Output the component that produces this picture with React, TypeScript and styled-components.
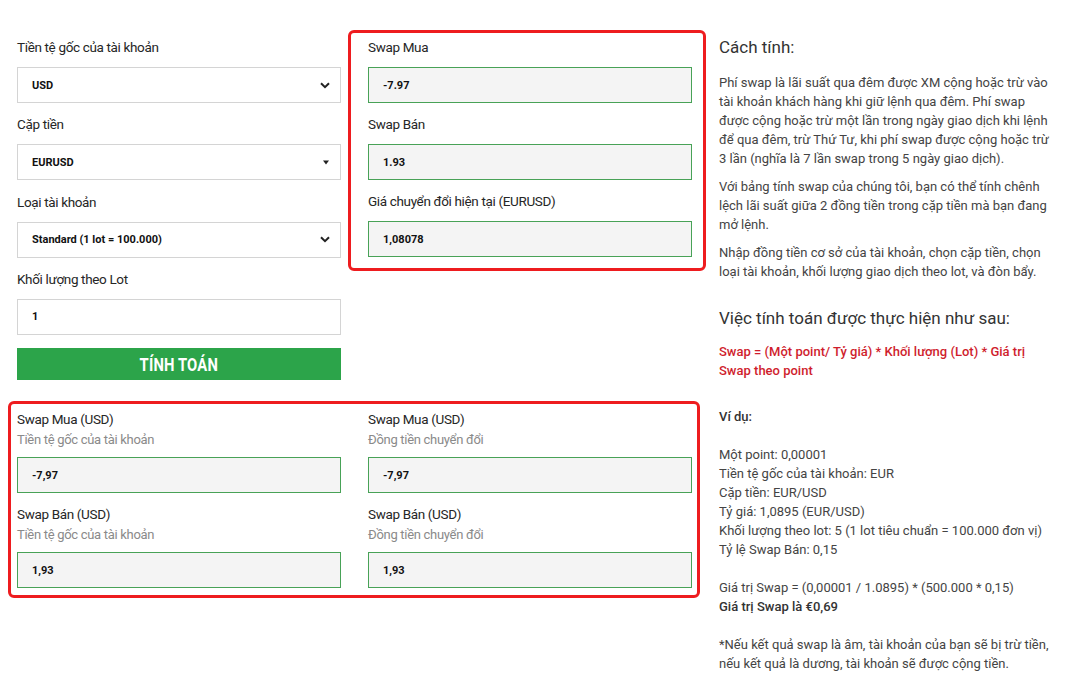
import React from "react";
import styled, { createGlobalStyle } from "styled-components";

const GlobalStyle = createGlobalStyle`
  html, body {
    margin: 0;
    padding: 0;
    background: #ffffff;
  }
  body {
    font-family: Roboto, "Noto Sans", "Liberation Sans", sans-serif;
    color: #333;
  }
  * { box-sizing: border-box; }
`;

const Page = styled.div`
  display: flex;
  align-items: flex-start;
  padding: 30px 0 0 8px;
  width: 1084px;
  min-height: 687px;
`;

const Calculator = styled.div`
  display: flex;
  flex-direction: column;
  width: 698px;
`;

const TopRow = styled.div`
  display: flex;
  align-items: flex-start;
`;

const FormColumn = styled.div`
  display: flex;
  flex-direction: column;
  gap: 13.3px;
  width: 324px;
  margin: 9px 0 0 9px;
`;

const Field = styled.div`
  display: flex;
  flex-direction: column;
`;

const Label = styled.div`
  font-size: 13.5px;
  line-height: 16px;
  height: 16px;
  color: #262626;
  letter-spacing: -0.35px;
  white-space: nowrap;
`;

const SubLabel = styled.div`
  font-size: 13px;
  line-height: 16px;
  height: 16px;
  margin-top: 5px;
  color: #8a8a8a;
  letter-spacing: -0.3px;
  white-space: nowrap;
`;

const Box = styled.div<{ $tone?: "plain" | "result" }>`
  display: flex;
  align-items: center;
  justify-content: space-between;
  height: 36px;
  margin-top: ${(p) => (p.$tone === "result" ? "9px" : "12px")};
  padding: 0 10px 0 14px;
  font-size: 11px;
  font-weight: 700;
  color: #111;
  background: ${(p) => (p.$tone === "result" ? "#f4f4f4" : "#ffffff")};
  border: ${(p) => (p.$tone === "result" ? "1px solid #48a257" : "1.5px solid #d4d4d4")};
  white-space: nowrap;
`;

const ResultBox = styled(Box)`
  margin-top: 12px;
`;

const Arrow = styled.svg`
  flex: none;
  color: #222;
`;

const CalcButton = styled.button`
  display: flex;
  align-items: center;
  justify-content: center;
  height: 32px;
  width: 100%;
  border: none;
  background: #2ca44a;
  color: #fff;
  font-family: Roboto, "Noto Sans", sans-serif;
  font-weight: 700;
  font-size: 18px;
  cursor: pointer;
  padding: 0;
`;

const ButtonText = styled.span`
  display: inline-block;
  transform: scaleX(0.82);
  letter-spacing: 0.2px;
`;

const Highlight = styled.div`
  border: 3px solid #ee1c1f;
  border-radius: 6px;
`;

const RatesBox = styled(Highlight)`
  display: flex;
  flex-direction: column;
  gap: 13px;
  width: 358px;
  margin-left: 7px;
  padding: 6px 11px 11px 17px;
`;

const ConvertedBox = styled(Highlight)`
  display: grid;
  grid-template-columns: 324px 324px;
  column-gap: 27px;
  row-gap: 13px;
  width: 692px;
  margin-top: 21px;
  padding: 7px 5px 7px 6px;
`;

const Article = styled.div`
  width: 338px;
  margin: 7px 0 0 13px;
  font-size: 13px;
  line-height: 19px;
  color: #444;
`;

const Heading = styled.h3<{ $gap?: number }>`
  margin: ${(p) => p.$gap ?? 0}px 0 0 0;
  font-size: 17px;
  line-height: 20px;
  font-weight: 400;
  color: #333;
`;

const Para = styled.p<{ $gap?: number }>`
  margin: ${(p) => p.$gap ?? 9}px 0 0 0;
`;

const Formula = styled.p`
  margin: 14px 0 0 0;
  color: #cf1d2d;
  font-weight: 500;
`;

const Strong = styled.span`
  font-weight: 500;
  color: #333;
`;

const Chevron = () => (
  <Arrow width="10" height="7" viewBox="0 0 10 7">
    <path d="M1 1.2 L5 5.2 L9 1.2" fill="none" stroke="currentColor" strokeWidth="2" />
  </Arrow>
);

const Caret = () => (
  <Arrow width="8" height="5" viewBox="0 0 8 5">
    <path d="M1 0.5 L7 0.5 L4 4.5 Z" fill="currentColor" />
  </Arrow>
);

type Option = { label: string; value: string; arrow?: "chevron" | "caret" | "none" };

const inputs: Option[] = [
  { label: "Tiền tệ gốc của tài khoản", value: "USD", arrow: "chevron" },
  { label: "Cặp tiền", value: "EURUSD", arrow: "caret" },
  { label: "Loại tài khoản", value: "Standard (1 lot = 100.000)", arrow: "chevron" },
  { label: "Khối lượng theo Lot", value: "1", arrow: "none" },
];

const rates = [
  { label: "Swap Mua", value: "-7.97" },
  { label: "Swap Bán", value: "1.93" },
  { label: "Giá chuyển đổi hiện tại (EURUSD)", value: "1,08078" },
];

const converted = [
  { label: "Swap Mua (USD)", sub: "Tiền tệ gốc của tài khoản", value: "-7,97" },
  { label: "Swap Mua (USD)", sub: "Đồng tiền chuyển đổi", value: "-7,97" },
  { label: "Swap Bán (USD)", sub: "Tiền tệ gốc của tài khoản", value: "1,93" },
  { label: "Swap Bán (USD)", sub: "Đồng tiền chuyển đổi", value: "1,93" },
];

export default function App() {
  return (
    <>
      <GlobalStyle />
      <Page>
        <Calculator>
          <TopRow>
            <FormColumn>
              {inputs.map((f) => (
                <Field key={f.label}>
                  <Label>{f.label}</Label>
                  <Box $tone="plain">
                    <span>{f.value}</span>
                    {f.arrow === "chevron" && <Chevron />}
                    {f.arrow === "caret" && <Caret />}
                  </Box>
                </Field>
              ))}
              <CalcButton>
                <ButtonText>TÍNH TOÁN</ButtonText>
              </CalcButton>
            </FormColumn>
            <RatesBox>
              {rates.map((r) => (
                <Field key={r.label}>
                  <Label>{r.label}</Label>
                  <ResultBox $tone="result">
                    <span>{r.value}</span>
                  </ResultBox>
                </Field>
              ))}
            </RatesBox>
          </TopRow>
          <ConvertedBox>
            {converted.map((c, i) => (
              <Field key={i}>
                <Label>{c.label}</Label>
                <SubLabel>{c.sub}</SubLabel>
                <Box $tone="result">
                  <span>{c.value}</span>
                </Box>
              </Field>
            ))}
          </ConvertedBox>
        </Calculator>
        <Article>
          <Heading>Cách tính:</Heading>
          <Para $gap={16}>
            Phí swap là lãi suất qua đêm được XM cộng hoặc trừ vào tài khoản khách hàng khi
            giữ lệnh qua đêm. Phí swap được cộng hoặc trừ một lần trong ngày giao dịch khi
            lệnh để qua đêm, trừ Thứ Tư, khi phí swap được cộng hoặc trừ 3 lần (nghĩa là 7
            lần swap trong 5 ngày giao dịch).
          </Para>
          <Para>
            Với bảng tính swap của chúng tôi, bạn có thể tính chênh lệch lãi suất giữa 2 đồng
            tiền trong cặp tiền mà bạn đang mở lệnh.
          </Para>
          <Para>
            Nhập đồng tiền cơ sở của tài khoản, chọn cặp tiền, chọn loại tài khoản, khối
            lượng giao dịch theo lot, và đòn bẩy.
          </Para>
          <Heading $gap={27}>Việc tính toán được thực hiện như sau:</Heading>
          <Formula>
            Swap = (Một point/ Tỷ giá) * Khối lượng (Lot) * Giá trị Swap theo point
          </Formula>
          <Para $gap={27}>
            <Strong>Ví dụ:</Strong>
            <br />
            <br />
            Một point: 0,00001
            <br />
            Tiền tệ gốc của tài khoản: EUR
            <br />
            Cặp tiền: EUR/USD
            <br />
            Tỷ giá: 1,0895 (EUR/USD)
            <br />
            Khối lượng theo lot: 5 (1 lot tiêu chuẩn = 100.000 đơn vị)
            <br />
            Tỷ lệ Swap Bán: 0,15
            <br />
            <br />
            Giá trị Swap = (0,00001 / 1.0895) * (500.000 * 0,15)
            <br />
            <Strong>Giá trị Swap là €0,69</Strong>
            <br />
            <br />
            *Nếu kết quả swap là âm, tài khoản của bạn sẽ bị trừ tiền, nếu kết quả là dương,
            tài khoản sẽ được cộng tiền.
          </Para>
        </Article>
      </Page>
    </>
  );
}
